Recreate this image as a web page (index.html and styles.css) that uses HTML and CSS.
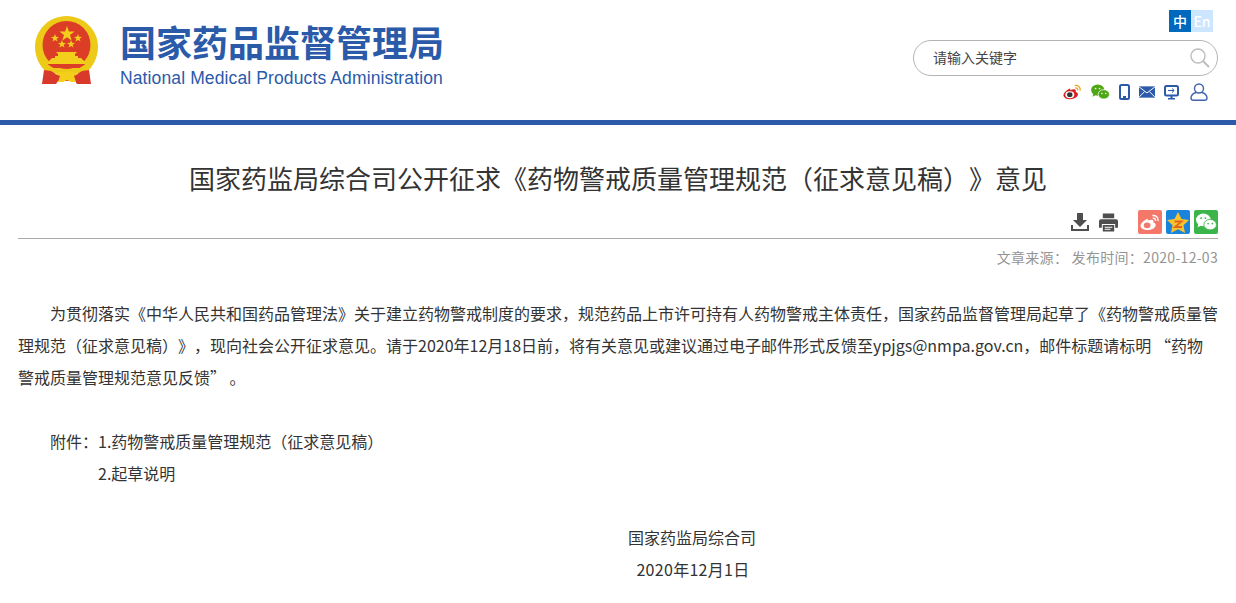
FILE: index.html
```html
<!DOCTYPE html>
<html lang="zh-CN">
<head>
    <meta charset="UTF-8">
    <title>国家药监局综合司公开征求《药物警戒质量管理规范（征求意见稿）》意见</title>
    <link rel="stylesheet" href="styles.css">
</head>
<body>
    <header class="site-header">
        <div class="brand">
            <svg class="emblem" width="64" height="70" viewBox="0 0 64 70">
                <path fill="#edc918" d="M31.500 0C14 0 0 14 0 31c0 11 5.500 20 12 26h39c6.500-6 12-15 12-26C63 14 49 0 31.500 0z"/>
                <circle cx="31.500" cy="29" r="24" fill="#dc3d27"/>
                <polygon fill="#f3cf1c" points="32,10 33.900,15.400 39.600,15.500 35,19 36.700,24.500 32,21.200 27.300,24.500 29,19 24.400,15.500 30.100,15.400"/>
                <polygon fill="#f3cf1c" points="20,18 21,20.800 24,20.900 21.600,22.700 22.500,25.500 20,23.900 17.500,25.500 18.400,22.700 16,20.900 19,20.800"/>
                <polygon fill="#f3cf1c" points="43,18 44,20.800 47,20.900 44.600,22.700 45.500,25.500 43,23.900 40.500,25.500 41.400,22.700 39,20.900 42,20.800"/>
                <polygon fill="#f3cf1c" points="27,24 28,26.800 31,26.900 28.600,28.700 29.500,31.500 27,29.900 24.500,31.500 25.400,28.700 23,26.900 26,26.800"/>
                <polygon fill="#f3cf1c" points="36,24 37,26.800 40,26.900 37.600,28.700 38.500,31.500 36,29.900 33.500,31.500 34.400,28.700 32,26.900 35,26.800"/>
                <path fill="#f3cf1c" d="M21 36h21l-2 2v2h3v2h3l4 4v2H13v-2l4-4h3v-2h3v-2z"/>
                <path fill="#dc3d27" d="M12 48h39l-3 4H15z"/>
                <path fill="none" stroke="#edc918" stroke-width="3" d="M9 46c5 7 14 10 22.500 10S49 53 54 46"/>
                <path fill="#d8392a" d="M9 54l7 1c4 3 9 5 15.500 5S43 58 47 55l7-1 2 14H42l-2-3H23l-2 3H7z"/>
                <path fill="#f3cf1c" d="M20 58c4-3 19-3 23 0l-4 2 2 6-5 0-4-2-4 2-5 0 2-6z"/>
            </svg>
            <div class="brand-text">
                <div class="brand-cn">国家药品监督管理局</div>
                <div class="brand-en">National Medical Products Administration</div>
            </div>
        </div>
        <div class="header-right">
            <div class="lang">
                <span class="lang-item lang-on">中</span>
                <span class="lang-item lang-off">En</span>
            </div>
            <div class="search">
                <span class="search-hint">请输入关键字</span>
                <svg width="20" height="20" viewBox="0 0 20 20" fill="none" stroke="#bdbdbd">
                    <circle cx="8" cy="8" r="7" stroke-width="1.400"/>
                    <path d="M13 13l6 6" stroke-width="2"/>
                </svg>
            </div>
            <div class="quick-links">
                <svg width="19" height="16" viewBox="0 0 21 17">
                    <path fill="#d81e1e" d="M8 4.500C4 6 .5 9.500 .5 12c0 2.500 3.500 4.500 7.500 4.500s8.500-2.500 8.500-5.500c0-1.800-1.800-2.300-2.500-2.500 .5-1.500 .3-3-2-3-1.200 0-2.500 .5-4 1z"/>
                    <ellipse cx="7.500" cy="11.500" rx="5" ry="3.800" fill="#fff"/>
                    <ellipse cx="7.500" cy="11.500" rx="3" ry="2.600" fill="#333"/>
                    <path fill="none" stroke="#eaa51c" stroke-width="1.500" d="M13 1.200c3.500-.5 6.500 2 6 5.800M13.500 4c1.800-.2 3 1 2.800 2.800"/>
                </svg>
                <svg width="19" height="16" viewBox="0 0 20 17">
                    <ellipse cx="7" cy="6.500" rx="7" ry="6" fill="#4ea816"/>
                    <path fill="#4ea816" d="M2.500 10l-1 3.500 4-2z"/>
                    <ellipse cx="13.500" cy="11" rx="6" ry="5" fill="#4ea816" stroke="#fff" stroke-width=".8"/>
                    <circle cx="4.800" cy="4.800" r=".9" fill="#fff"/>
                    <circle cx="9" cy="4.800" r=".9" fill="#fff"/>
                    <circle cx="11.500" cy="10" r=".8" fill="#fff"/>
                    <circle cx="15.500" cy="10" r=".8" fill="#fff"/>
                </svg>
                <svg width="11" height="16" viewBox="0 0 11 16">
                    <rect x="1" y="1" width="9" height="14" rx="1.500" fill="none" stroke="#2b5aa9" stroke-width="2"/>
                    <rect x="4" y="12" width="3" height="2" fill="#2b5aa9"/>
                </svg>
                <svg width="16" height="12" viewBox="0 0 17 12">
                    <rect width="17" height="12" fill="#2b5aa9"/>
                    <path fill="none" stroke="#fff" d="M0 .5l8.500 6.500L17 .5M0 11.500l6-6M17 11.500l-6-6"/>
                </svg>
                <svg width="15" height="15" viewBox="0 0 15 15">
                    <rect x="1" y="1" width="13" height="9.500" rx="1.500" fill="none" stroke="#2b5aa9" stroke-width="2"/>
                    <path fill="none" stroke="#2b5aa9" d="M4 5.500h6M8 3.500l2.200 2-2.200 2"/>
                    <path fill="#2b5aa9" d="M6.500 11h2v2H11v1.500H4V13h2.500z"/>
                </svg>
                <svg class="link-user" width="18" height="18" viewBox="0 0 18 18" fill="none" stroke="#3f62ae" stroke-width="1.400">
                    <circle cx="9" cy="5.500" r="4.500"/>
                    <path d="M6 9.500C3 10.500 1 12.500 1 15c0 1.500 1 2.300 2.500 2.300h11c1.500 0 2.500-.8 2.500-2.300 0-2.500-2-4.500-5-5.500"/>
                </svg>
            </div>
        </div>
    </header>

    <main class="article">
        <h1 class="article-title">国家药监局综合司公开征求《药物警戒质量管理规范（征求意见稿）》意见</h1>
        <div class="article-tools">
            <svg class="tool-icon" width="18" height="18" viewBox="0 0 18 18" fill="#4f4f4f">
                <path d="M6 0h6v7h4l-7 7-7-7h4z"/>
                <path d="M0 12h2v4h14v-4h2v6H0z"/>
            </svg>
            <svg class="tool-icon tool-print" width="19" height="19" viewBox="0 0 20 19" fill="#4f4f4f">
                <path d="M4 0h12v5H4z"/>
                <path d="M2 6h16a2 2 0 0 1 2 2v7h-3v-4H3v4H0V8a2 2 0 0 1 2-2z"/>
                <path d="M4 12h12v7H4zm2 2v1h8v-1zm0 2v1h6v-1z" fill-rule="evenodd"/>
            </svg>
            <span class="share share-weibo">
                <svg width="20" height="17" viewBox="0 0 21 17">
                    <path fill="#fff" d="M8 4.500C4 6 .5 9.500 .5 12c0 2.500 3.500 4.500 7.500 4.500s8.500-2.500 8.500-5.500c0-1.800-1.800-2.300-2.500-2.500 .5-1.500 .3-3-2-3-1.200 0-2.500 .5-4 1z"/>
                    <ellipse cx="7.500" cy="11.500" rx="3.500" ry="3" fill="#f4786a"/>
                    <path fill="none" stroke="#fff" stroke-width="1.500" d="M13 1.200c3.500-.5 6.500 2 6 5.800M13.500 4c1.800-.2 3 1 2.800 2.800"/>
                </svg>
            </span>
            <span class="share share-qzone">
                <svg width="24" height="23" viewBox="0 0 24 23">
                    <polygon fill="#f8c32c" points="12,1 15.500,8 23,9 17.500,14.200 19,22 12,18.200 5,22 6.500,14.200 1,9 8.500,8"/>
                    <path fill="none" stroke="#e2661e" stroke-width="1.800" d="M8.500 10.500h7l-6.500 5.500h7"/>
                </svg>
            </span>
            <span class="share share-wechat">
                <svg width="21" height="18" viewBox="0 0 20 17">
                    <ellipse cx="7" cy="6.500" rx="7" ry="6" fill="#fff"/>
                    <path fill="#fff" d="M2.500 10l-1 3.500 4-2z"/>
                    <ellipse cx="13.500" cy="11" rx="6" ry="5" fill="#fff" stroke="#3bb54a" stroke-width=".8"/>
                    <circle cx="4.800" cy="4.800" r=".9" fill="#3bb54a"/>
                    <circle cx="9" cy="4.800" r=".9" fill="#3bb54a"/>
                    <circle cx="11.500" cy="10" r=".8" fill="#3bb54a"/>
                    <circle cx="15.500" cy="10" r=".8" fill="#3bb54a"/>
                </svg>
            </span>
        </div>
        <div class="article-meta">文章来源： 发布时间：2020-12-03</div>
        <div class="article-body">
            <p class="indent">为贯彻落实《中华人民共和国药品管理法》关于建立药物警戒制度的要求，规范药品上市许可持有人药物警戒主体责任，国家药品监督管理局起草了《药物警戒质量管理规范（征求意见稿）》，现向社会公开征求意见。请于2020年12月18日前，将有关意见或建议通过电子邮件形式反馈至ypjgs@nmpa.gov.cn，邮件标题请标明 “药物警戒质量管理规范意见反馈” 。</p>
            <p class="blank"></p>
            <p class="indent">附件：1.药物警戒质量管理规范（征求意见稿）</p>
            <p class="attach-2">2.起草说明</p>
            <p class="blank"></p>
            <p class="signature">国家药监局综合司</p>
            <p class="signature sign-date">2020年12月1日</p>
        </div>
    </main>
</body>
</html>
```

FILE: styles.css
```css
body {
    margin: 0;
    background-color: #fff;
    color: #333;
    font-family: "Noto Sans CJK SC", "Liberation Sans", sans-serif;
    font-size: 16px;
    text-spacing-trim: space-all;
    font-feature-settings: "palt" 0, "chws" 0;
}
.site-header {
    display: flex;
    justify-content: space-between;
    height: 120px;
    border-bottom: 5px solid #2b5aa9;
    padding: 0 18px 0 35px;
}
.brand {
    display: flex;
    align-items: flex-start;
    padding-top: 16px;
}
.emblem {
    margin-right: 21px;
}
.brand-text {
    color: #2b5aa9;
}
.brand-cn {
    font-size: 36px;
    font-weight: 700;
    line-height: 44px;
    margin-top: 3px;
}
.brand-en {
    font-family: "Liberation Sans", sans-serif;
    font-size: 17.5px;
    letter-spacing: .12px;
    line-height: 22px;
    margin-top: 4px;
}
.header-right {
    display: flex;
    flex-direction: column;
    align-items: flex-end;
    width: 305px;
}
.lang {
    display: flex;
    margin: 10px 5px 0 0;
}
.lang-item {
    width: 22px;
    height: 22px;
    line-height: 22px;
    text-align: center;
    font-size: 14px;
    font-weight: 500;
    color: #fff;
}
.lang-on {
    background-color: #0068bd;
}
.lang-off {
    background-color: #cce6ff;
}
.search {
    display: flex;
    align-items: center;
    justify-content: space-between;
    box-sizing: border-box;
    width: 305px;
    height: 36px;
    margin-top: 8px;
    padding: 0 7px 0 19px;
    border: 1px solid #b4b4b4;
    border-radius: 18px;
}
.search-hint {
    font-size: 14px;
    color: #444;
    padding-bottom: 2px;
}
.quick-links {
    display: flex;
    align-items: center;
    gap: 9px;
    margin: 7px 10px 0 0;
}
.link-user {
    margin-left: 2px;
}
.article {
    padding: 0 18px;
}
.article-title {
    margin: 0;
    padding-top: 35px;
    font-size: 26px;
    font-weight: 400;
    line-height: 36px;
    text-align: center;
    color: #333;
}
.article-tools {
    display: flex;
    justify-content: flex-end;
    align-items: center;
    gap: 4px;
    height: 30px;
    margin-top: 11px;
    border-bottom: 1px solid #aaa;
    padding-bottom: 1px;
}
.tool-print {
    margin: 0 16px 0 6px;
}
.share {
    display: flex;
    align-items: center;
    justify-content: center;
    width: 24px;
    height: 24px;
    border-radius: 2px;
}
.share-weibo {
    background-color: #f4786a;
}
.share-qzone {
    background-color: #1a83dc;
}
.share-wechat {
    background-color: #3bb54a;
}
.article-meta {
    margin-top: 8px;
    font-size: 14px;
    letter-spacing: .3px;
    line-height: 20px;
    text-align: right;
    color: #949494;
}
.article-body {
    margin-top: 30px;
    line-height: 32px;
}
.article-body p {
    margin: 0;
    min-height: 32px;
}
.indent {
    text-indent: 2em;
}
.attach-2 {
    padding-left: 80px;
}
.signature {
    padding-left: 148px;
    text-align: center;
}
.sign-date {
    letter-spacing: .3px;
    padding-left: 150px;
}
```
